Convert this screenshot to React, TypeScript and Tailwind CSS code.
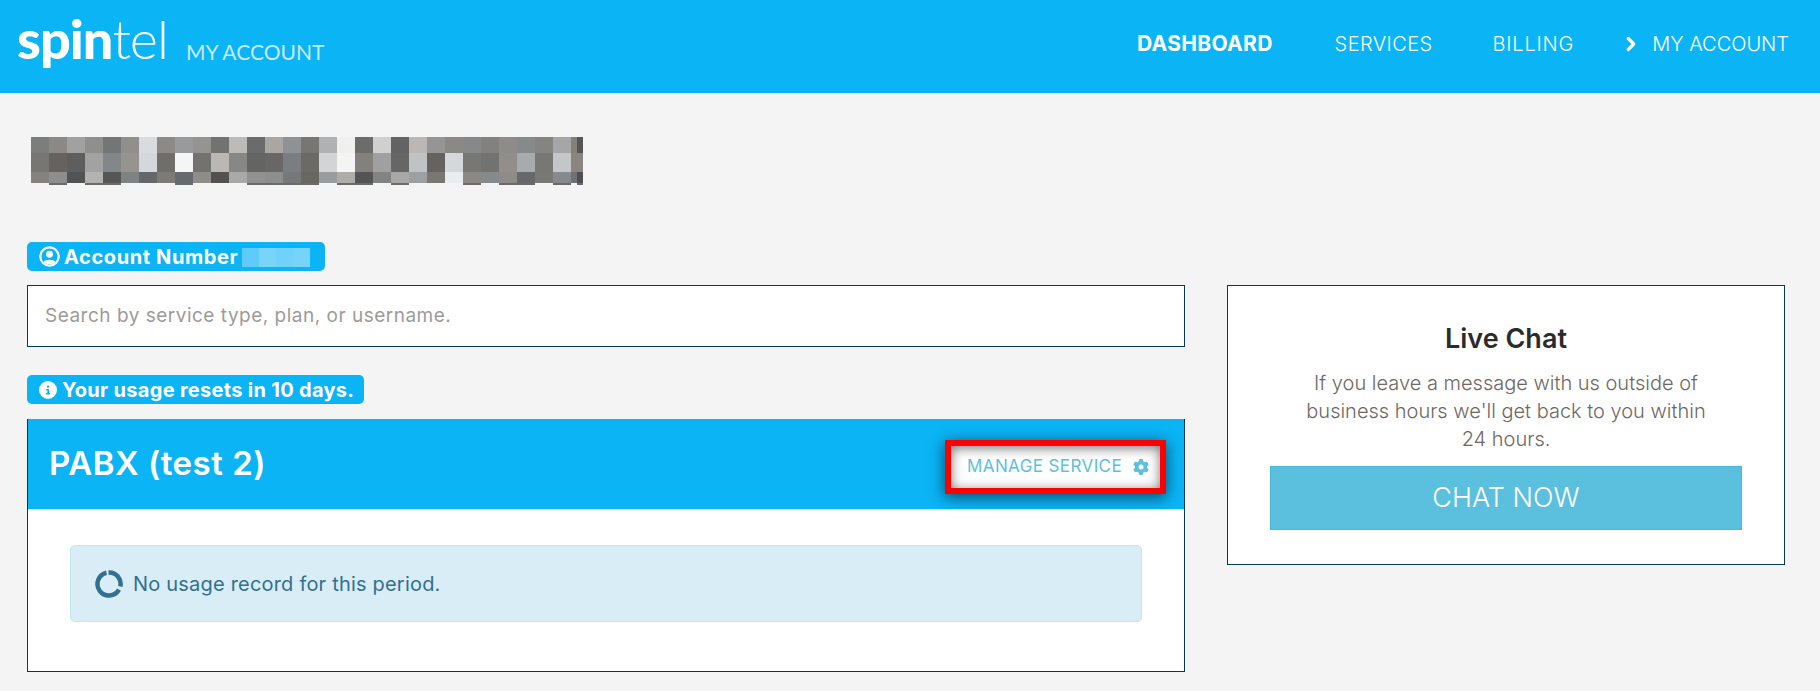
import { ChevronRight } from "lucide-react";
import { FaCircleInfo, FaGear } from "react-icons/fa6";

const montserrat = "font-['Inter','Noto_Sans',sans-serif]";

// pixelated name, one list per row
const mosaicRows = [
  { h: "h-[16px]", tiles: ["#7c7e7e", "#8b8886", "#a1a1a1", "#8f8f8e", "#747675", "#918f8c", "#d9dcde", "#8c8986", "#989a9c", "#969490", "#727272", "#bcbbb9", "#6a6b6c", "#aaa7a3", "#8f9294", "#777672", "#b0b1b3", "#f0f0ef", "#6c6c6c", "#d0d0d0", "#636364", "#bab7b4", "#949594", "#8a8986", "#878889", "#83817d", "#8e8c88", "#868a8c", "#858480", "#a4a6a8", "#858078", "#555555"] },
  { h: "h-[19px]", tiles: ["#777674", "#666260", "#5e5e5e", "#a2a2a2", "#84878a", "#97938f", "#d4d8da", "#6e6e6d", "#f5f5f5", "#727271", "#bbb7b3", "#878786", "#646463", "#686766", "#7b7e80", "#6b6a66", "#d2d4d5", "#f4f4f4", "#84807c", "#a0a0a0", "#666666", "#c0c2c3", "#64635f", "#d4d8da", "#777773", "#727370", "#928e8a", "#a8abad", "#787773", "#c4c6c8", "#8a8580", "#8a8580"] },
  { h: "h-[11px]", tiles: ["#86837f", "#8e8e8e", "#525354", "#b5b3af", "#565655", "#7f8285", "#63676a", "#7e7a76", "#666a70", "#908d89", "#525150", "#a9a9a8", "#909190", "#8d8f8f", "#76787a", "#686760", "#9a9da0", "#b0aca8", "#545456", "#828383", "#aaa8a5", "#9ca0a3", "#7a7773", "#eaedf0", "#8c8985", "#858a8d", "#8f8c87", "#65696c", "#7b7873", "#848a8e", "#70707a", "#4f4f4f"] },
  { h: "h-[2px]", tiles: ["transparent", "#6a6a6a", "transparent", "#6a6a6a", "#6a6a6a", "transparent", "transparent", "transparent", "#6a6a6a", "transparent", "transparent", "transparent", "#6a6a6a", "#6a6a6a", "#6a6a6a", "#6a6a6a", "transparent", "#6a6a6a", "#6a6a6a", "transparent", "#6a6a6a", "transparent", "transparent", "transparent", "#6a6a6a", "transparent", "#6a6a6a", "#6a6a6a", "transparent", "#6a6a6a", "transparent", "#6a6a6a"] },
];

const accountTiles = ["#5ecbf8", "#79d4fa", "#70d2fa", "#76d3fa"];

export default function App() {
  return (
    <div className={`min-h-[691px] bg-[#f4f4f4] ${montserrat}`}>

      {/* Top bar */}
      <header className="h-[93px] bg-[#0ab4f5] text-white flex items-center justify-between pl-[17px] pr-[31px]">
        <div className="flex items-end gap-[18px] pb-[12px]">
          <div className="font-['Lato',sans-serif] text-[54px] leading-[54px] tracking-[-1px] h-[58px]">
            <span className="font-black">spin</span>
            <span className="font-light">tel</span>
          </div>
          <span className="font-['Lato',sans-serif] text-[21px] leading-[24px] text-[#c6eafb] pb-[6px]">MY ACCOUNT</span>
        </div>
        <nav className="flex items-center text-[20px] leading-[24px] font-light pb-[6px]">
          <span className="font-bold text-[21px] tracking-[0.3px] mr-[62px]">DASHBOARD</span>
          <span className="mr-[60px] tracking-[0.4px]">SERVICES</span>
          <span className="mr-[46px] tracking-[0.8px]">BILLING</span>
          <ChevronRight className="w-[22px] h-[22px] mr-[10px]" strokeWidth={3.5} />
          <span>MY ACCOUNT</span>
        </nav>
      </header>

      {/* Welcome heading, pixelated in the source */}
      <section className="pl-[31px] pt-[44px] w-[600px] h-[92px]">
        {mosaicRows.map((row, r) => (
          <div key={r} className={`flex ${row.h}`}>
            {row.tiles.map((color, i) => (
              <div key={i} className={i >= 30 ? "w-[6px]" : "w-[18px]"} style={{ backgroundColor: color }} />
            ))}
          </div>
        ))}
      </section>

      <main className="flex items-start gap-[42px] pl-[27px] pr-[35px] pt-[57px]">
        {/* Left column */}
        <div className="w-[1158px]">
          <div className="flex items-center h-[29px] w-[298px] rounded-[5px] bg-[#0ab4f5] pl-[12px] text-white font-bold text-[20px] tracking-[0.6px]">
            <svg viewBox="0 0 22 22" className="w-[21px] h-[21px] mr-[4px] shrink-0">
              <circle cx="11" cy="11" r="9.6" fill="none" stroke="white" strokeWidth="2.4" />
              <circle cx="11" cy="8.6" r="3.6" fill="white" />
              <path d="M4.8 17 C6 13.6 16 13.6 17.2 17 C15 19.6 7 19.6 4.8 17 Z" fill="white" />
            </svg>
            Account Number
            <div className="flex ml-[4px] h-[19px] mt-[2px]">
              {accountTiles.map((color, i) => (
                <div key={i} className="w-[17px]" style={{ backgroundColor: color }} />
              ))}
            </div>
          </div>

          <div className="mt-[14px] h-[62px] border border-[#063a52] bg-white flex items-center pl-[17px] text-[19px] tracking-[0.5px] text-[#a09a96]">
            Search by service type, plan, or username.
          </div>

          <div className="mt-[28px] flex items-center h-[29px] w-[337px] rounded-[5px] bg-[#0ab4f5] pl-[12px] text-white font-bold text-[20px] tracking-[0.3px]">
            <FaCircleInfo className="w-[18px] h-[18px] mr-[5px] shrink-0" />
            Your usage resets in 10 days.
          </div>

          {/* Service panel */}
          <div className="mt-[15px] h-[253px] border border-[#063a52] border-t-0 bg-white">
            <div className="h-[91px] bg-[#0ab4f5] border-b border-[#e2e2e2] flex items-center justify-between pl-[21px] pr-[18px]">
              <h2 className="text-white font-semibold text-[33px] tracking-[0.5px]">PABX (test 2)</h2>
              <div className="mt-[6px] border-[6px] border-[#ff0000] shadow-[0_3px_14px_rgba(0,0,0,0.6)]">
                <button className="w-[209px] h-[42px] bg-white shadow-[inset_0_2px_12px_rgba(0,0,0,0.55)] flex items-center pl-[16px] text-[#5bbfdf] text-[17px] tracking-[0.4px] whitespace-nowrap">
                  MANAGE SERVICE
                  <FaGear className="w-[16px] h-[16px] ml-[11px] shrink-0" />
                </button>
              </div>
            </div>
            <div className="px-[42px] pt-[35px]">
              <div className="h-[77px] rounded-[5px] border border-[#bce8f1] bg-[#d9edf7] flex items-center pl-[24px] text-[#31708f] text-[20px] tracking-[0.2px]">
                <svg viewBox="0 0 28 28" className="w-[28px] h-[28px] mr-[10px]" fill="none" stroke="#31708f" strokeWidth="4.5">
                  <path d="M13.5 2.5 A11.5 11.5 0 0 1 25.3 16.5" />
                  <path d="M24 19.7 A11.5 11.5 0 1 1 11.5 2.8" />
                </svg>
                No usage record for this period.
              </div>
            </div>
          </div>
        </div>

        {/* Live chat */}
        <aside className="w-[558px] h-[280px] mt-[43px] border border-[#063a52] bg-white flex flex-col items-center">
          <h3 className="mt-[38px] text-[27px] leading-[30px] font-semibold text-[#2b2b2b]">Live Chat</h3>
          <p className="mt-[15px] w-[420px] text-center text-[20px] leading-[28px] font-light text-[#6e6864]">
            If you leave a message with us outside of business hours we'll get back to you within 24 hours.
          </p>
          <button className="mt-[13px] w-[472px] h-[64px] bg-[#5bc0de] border border-[#46b8da] text-white text-[27px] font-light">
            CHAT NOW
          </button>
        </aside>
      </main>
    </div>
  );
}
